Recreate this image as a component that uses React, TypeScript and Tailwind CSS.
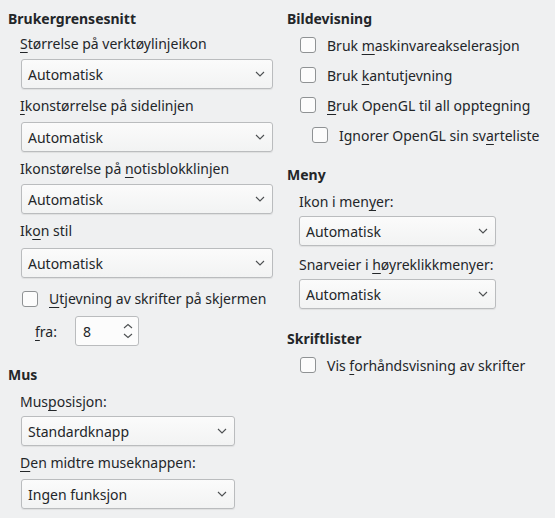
import type { ReactNode } from 'react';

function Mn({ children }: { children: ReactNode }) {
  return <span className="underline decoration-[1px] underline-offset-[3px]">{children}</span>;
}

function Chevron() {
  return (
    <svg width="10" height="6" viewBox="0 0 10 6" className="shrink-0">
      <path d="M1 1 L5 5 L9 1" fill="none" stroke="#4d5052" strokeWidth="1.1" />
    </svg>
  );
}

function Select({ value, width, mt }: { value: string; width: string; mt: string }) {
  return (
    <div
      className={`${width} ${mt} h-[30px] shrink-0 flex items-center justify-between pl-[6px] pr-[7px] rounded-[3px] border border-[#babcbe] bg-gradient-to-b from-[#fbfbfb] to-[#f2f3f3] shadow-[0_1px_1px_rgba(0,0,0,0.07)]`}
    >
      <span>{value}</span>
      <Chevron />
    </div>
  );
}

function Check({ children, indent = 'ml-[13px]' }: { children: ReactNode; indent?: string }) {
  return (
    <div className={`h-[30px] flex items-center ${indent}`}>
      <div className="w-[16px] h-[16px] rounded-[3px] border border-[#8f9294] bg-[#fcfcfc] shrink-0" />
      <span className="ml-[11px]">{children}</span>
    </div>
  );
}

export default function App() {
  return (
    <div className="w-[555px] h-[518px] bg-[#eff0f1] text-[#232629] text-[14px] leading-[19px] font-['Noto_Sans',sans-serif] flex overflow-hidden">
      {/* venstre kolonne */}
      <div className="w-[279px] pl-[8px] pt-[9px] flex flex-col">
        <div className="h-[19px] font-bold">Brukergrensesnitt</div>
        <div className="pl-[13px] flex flex-col">
          <div className="mt-[6px] h-[19px] -ml-px">
            <Mn>S</Mn>tørrelse på verktøylinjeikon
          </div>
          <Select value="Automatisk" width="w-[252px]" mt="mt-[6px]" />
          <div className="mt-[7px] h-[19px] -ml-px">
            <Mn>I</Mn>konstørrelse på sidelinjen
          </div>
          <Select value="Automatisk" width="w-[252px]" mt="mt-[7px]" />
          <div className="mt-[7px] h-[19px] -ml-px">
            Ikonstørelse på <Mn>n</Mn>otisblokklinjen
          </div>
          <Select value="Automatisk" width="w-[252px]" mt="mt-[6px]" />
          <div className="mt-[7px] h-[19px] -ml-px">
            Ik<Mn>o</Mn>n stil
          </div>
          <Select value="Automatisk" width="w-[252px]" mt="mt-[8px]" />
          <div className="mt-[11px] h-[19px] flex items-center ml-[1px]">
            <div className="w-[16px] h-[16px] rounded-[3px] border border-[#8f9294] bg-[#fcfcfc] shrink-0" />
            <span className="ml-[11px]">
              <Mn>U</Mn>tjevning av skrifter på skjermen
            </span>
          </div>
          <div className="mt-[8px] h-[30px] flex items-center pl-[14px]">
            <span>
              <Mn>f</Mn>ra:
            </span>
            <div className="ml-[18px] w-[64px] h-[30px] rounded-[3px] border border-[#babcbe] bg-[#fcfcfc] flex items-center justify-between pl-[7px] pr-[5px]">
              <span>8</span>
              <svg width="10" height="16" viewBox="0 0 10 16">
                <path d="M1 5 L5 1.5 L9 5" fill="none" stroke="#4d5052" strokeWidth="1.1" />
                <path d="M1 11 L5 14.5 L9 11" fill="none" stroke="#4d5052" strokeWidth="1.1" />
              </svg>
            </div>
          </div>
        </div>
        <div className="mt-[19px] h-[19px] font-bold">Mus</div>
        <div className="pl-[13px] flex flex-col">
          <div className="mt-[8px] h-[19px] -ml-px">
            Mus<Mn>p</Mn>osisjon:
          </div>
          <Select value="Standardknapp" width="w-[214px]" mt="mt-[5px]" />
          <div className="mt-[7px] h-[19px] -ml-px">
            <Mn>D</Mn>en midtre museknappen:
          </div>
          <Select value="Ingen funksjon" width="w-[214px]" mt="mt-[7px]" />
        </div>
      </div>

      {/* høyre kolonne */}
      <div className="flex-1 pl-[8px] pt-[9px] flex flex-col">
        <div className="h-[19px] font-bold">Bildevisning</div>
        <div className="mt-[2px] flex flex-col">
          <Check>
            Bruk <Mn>m</Mn>askinvareakselerasjon
          </Check>
          <Check>
            Bruk <Mn>k</Mn>antutjevning
          </Check>
          <Check>
            <Mn>B</Mn>ruk OpenGL til all opptegning
          </Check>
          <Check indent="ml-[25px]">
            Ignorer OpenGL sin sv<Mn>a</Mn>rteliste
          </Check>
        </div>
        <div className="mt-[15px] h-[19px] font-bold">Meny</div>
        <div className="pl-[12px] flex flex-col">
          <div className="mt-[8px] h-[19px]">
            Ikon i men<Mn>y</Mn>er:
          </div>
          <Select value="Automatisk" width="w-[197px]" mt="mt-[5px]" />
          <div className="mt-[9px] h-[19px]">
            Snarveier i <Mn>h</Mn>øyreklikkmenyer:
          </div>
          <Select value="Automatisk" width="w-[197px]" mt="mt-[5px]" />
        </div>
        <div className="mt-[20px] h-[19px] font-bold">Skriftlister</div>
        <div className="mt-[2px]">
          <Check>
            Vis <Mn>f</Mn>orhåndsvisning av skrifter
          </Check>
        </div>
      </div>
    </div>
  );
}
